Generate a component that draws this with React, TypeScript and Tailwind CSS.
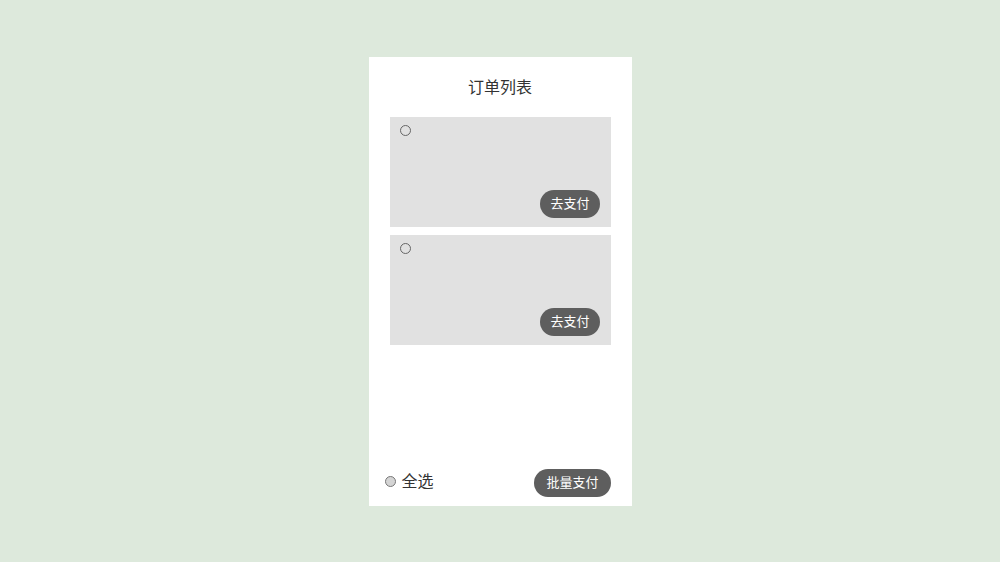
import React, { useState } from 'react';

const font = { fontFamily: '"Noto Sans CJK SC", "Noto Sans", sans-serif' };

interface Order {
    id: number;
}

const OrderCard: React.FC<{ checked: boolean; onToggle: () => void }> = ({ checked, onToggle }) => (
    <div className="bg-[#e1e1e1] h-[110px] flex flex-col justify-between pl-[10px] pr-[11px] pt-[8px] pb-[9px]">
        <button
            onClick={onToggle}
            className={`w-[11px] h-[11px] rounded-full border border-[#666] ${checked ? 'bg-[#666]' : 'bg-transparent'}`}
        />
        <div className="flex justify-end">
            <button className="h-[28px] px-[10px] pb-[3px] rounded-full bg-[#5e5e5e] text-white text-[13px] leading-none flex items-center">
                去支付
            </button>
        </div>
    </div>
);

export default function App() {
    const [orders] = useState<Order[]>([{ id: 1 }, { id: 2 }]);
    const [checked, setChecked] = useState<Record<number, boolean>>({});

    return (
        <div className="w-[1000px] h-[562px] bg-[#dde9dc] flex justify-center pt-[57px]" style={font}>
            <div className="w-[263px] h-[449px] bg-white flex flex-col">
                <div className="h-[60px] flex items-center justify-center text-[16px] text-[#333] pb-[3px]">
                    订单列表
                </div>
                <div className="flex flex-col gap-[8px] px-[21px]">
                    {orders.map(o => (
                        <OrderCard
                            key={o.id}
                            checked={!!checked[o.id]}
                            onToggle={() => setChecked({ ...checked, [o.id]: !checked[o.id] })}
                        />
                    ))}
                </div>
                <div className="mt-auto flex items-center justify-between pl-[16px] pr-[21px] pb-[9px]">
                    <div className="flex items-center gap-[6px] text-[16px] text-[#333] mb-[4px]">
                        <span className="w-[11px] h-[11px] rounded-full bg-[#d4d4d4] border border-[#777]" />
                        <span className="leading-none pb-[2px]">全选</span>
                    </div>
                    <button className="h-[28px] px-[12px] pb-[3px] rounded-full bg-[#5e5e5e] text-white text-[13px] leading-none flex items-center">
                        批量支付
                    </button>
                </div>
            </div>
        </div>
    );
}
